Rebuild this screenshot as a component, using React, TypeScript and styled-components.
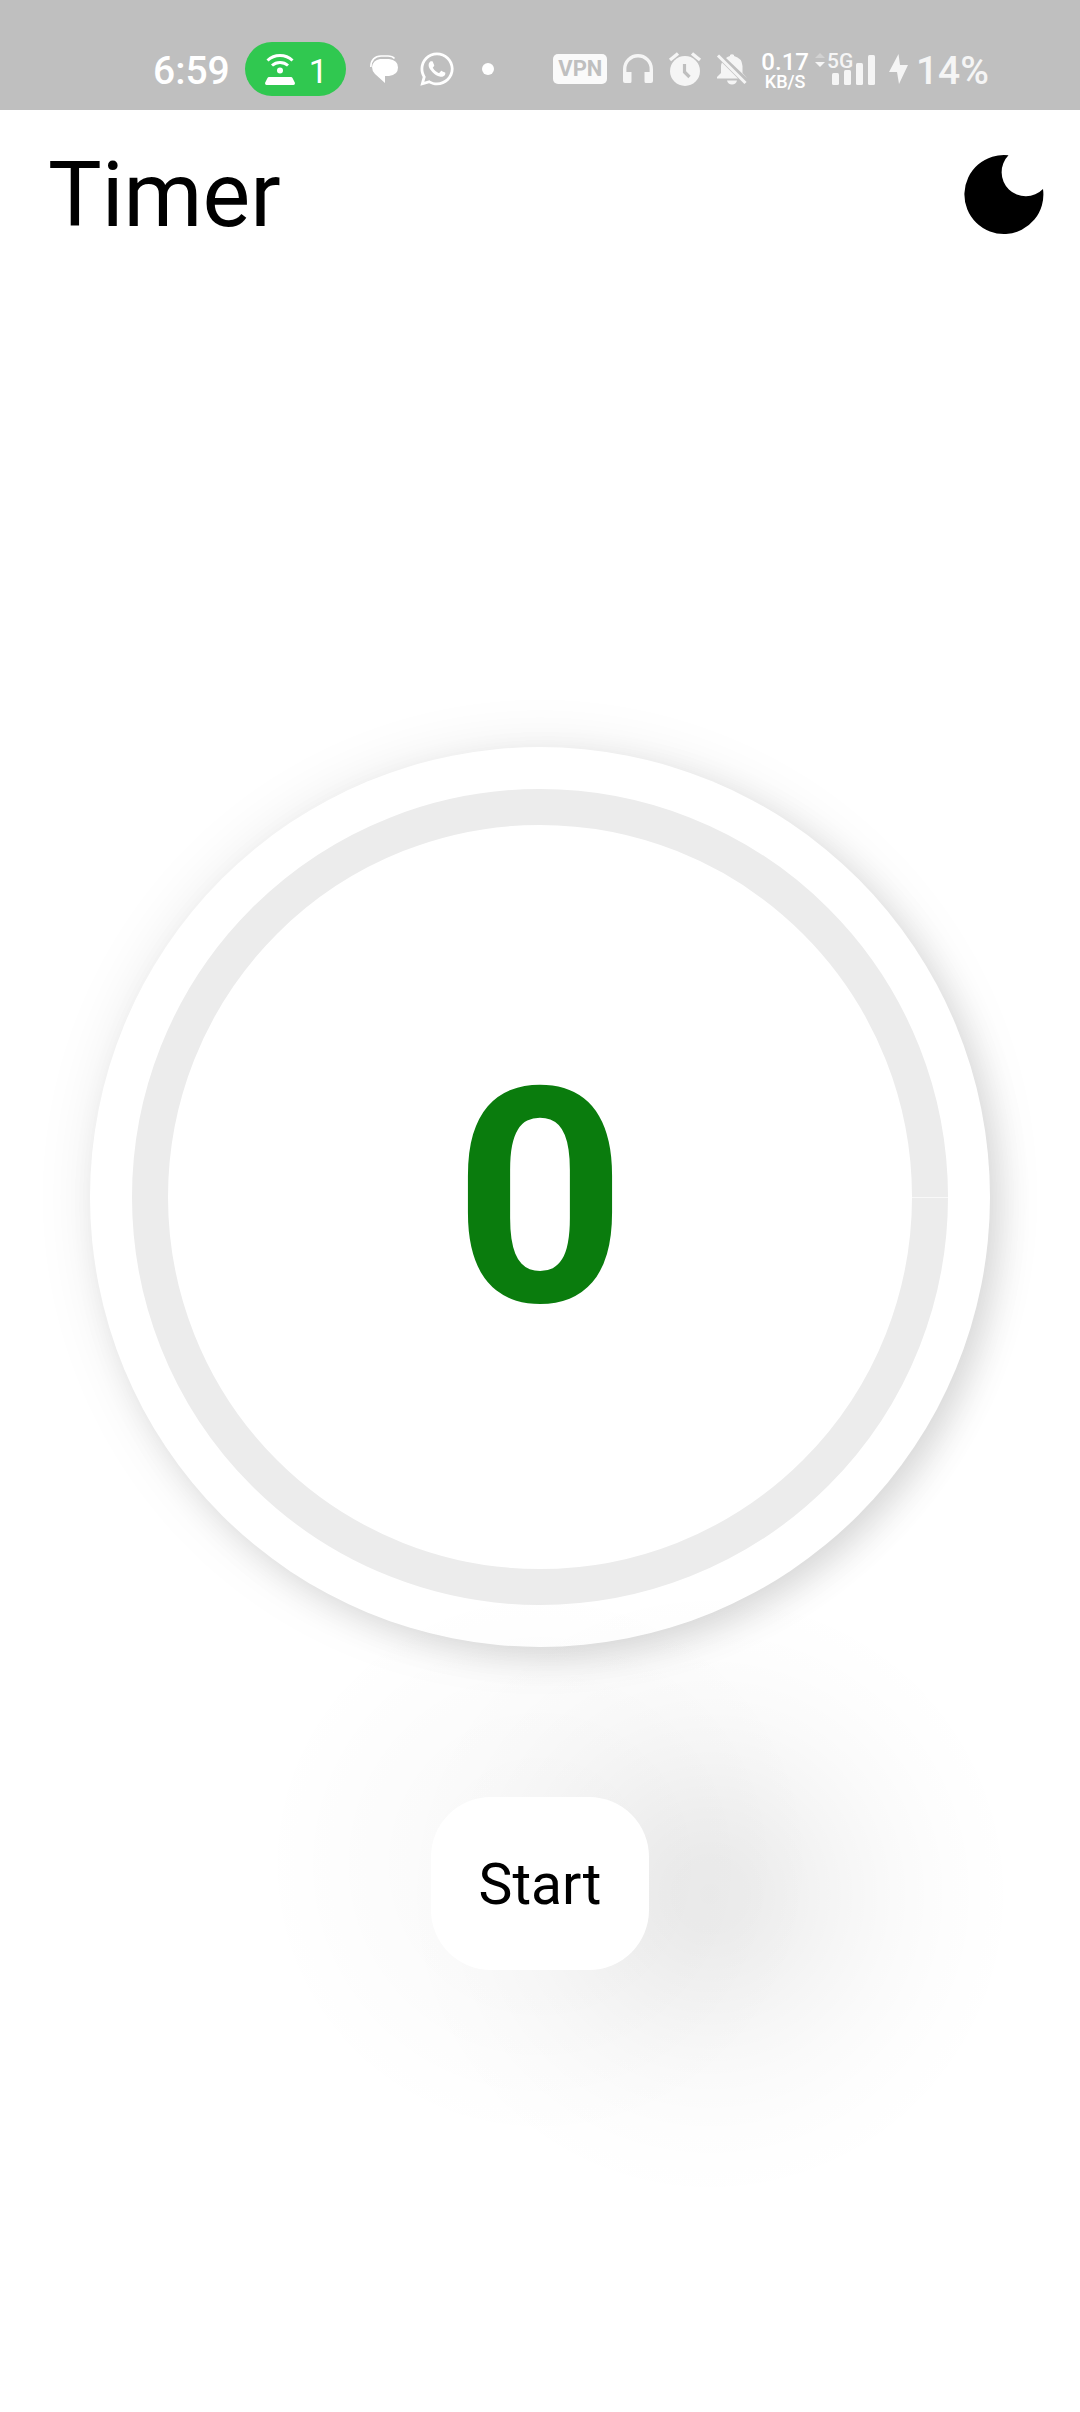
import React, { useEffect, useState } from "react";
import styled, { createGlobalStyle } from "styled-components";
import { FaWhatsapp } from "react-icons/fa";

const GlobalStyle = createGlobalStyle`
  *, *::before, *::after { box-sizing: border-box; }
  body {
    margin: 0;
    background: #ffffff;
    color: #000000;
    font-family: Roboto, "Noto Sans", sans-serif;
  }
  button { font-family: inherit; }
`;

const Screen = styled.div`
  display: flex;
  flex-direction: column;
  min-height: 100vh;
  overflow: hidden;
`;

const StatusBar = styled.div`
  display: flex;
  align-items: center;
  justify-content: space-between;
  height: 110px;
  padding: 28px 91px 0 153px;
  background: #bfbfbf;
  color: #ffffff;
`;

const StatusGroup = styled.div<{ $gap: number; $tone?: string }>`
  display: flex;
  align-items: center;
  gap: ${({ $gap }) => $gap}px;
  color: ${({ $tone }) => $tone ?? "#ffffff"};
`;

const StatusText = styled.span`
  padding-top: 4px;
  font-size: 39px;
  line-height: 46px;
  font-weight: 500;
`;

const HotspotPill = styled.span`
  display: flex;
  align-items: center;
  gap: 14px;
  height: 54px;
  padding: 0 18px 0 20px;
  border-radius: 27px;
  background: #30c850;
`;

const ClientCount = styled.span`
  padding-top: 4px;
  font-size: 34px;
  line-height: 40px;
`;

const VpnBadge = styled.span`
  padding: 0 5px;
  border-radius: 5px;
  background: #fafafa;
  color: #bfbfbf;
  font-size: 22px;
  line-height: 30px;
  font-weight: 700;
`;

const NetSpeed = styled.span`
  display: flex;
  flex-direction: column;
  align-items: center;
  padding-top: 4px;
  color: #ffffff;
`;

const SpeedValue = styled.span`
  font-size: 24px;
  line-height: 22px;
  font-weight: 500;
`;

const SpeedUnit = styled.span`
  font-size: 18px;
  line-height: 18px;
  font-weight: 500;
`;

const Icon = styled.svg`
  display: block;
  flex: none;
  overflow: visible;
`;

const Header = styled.header`
  display: flex;
  align-items: center;
  justify-content: space-between;
  height: 168px;
  padding: 0 37px 0 48px;
`;

const Title = styled.h1`
  margin: 0;
  padding-top: 4px;
  font-size: 90px;
  line-height: 106px;
  font-weight: 400;
`;

const ThemeButton = styled.button`
  padding: 0;
  border: 0;
  background: none;
  color: inherit;
  cursor: pointer;
`;

const Main = styled.main`
  display: flex;
  flex: 1;
  flex-direction: column;
  align-items: center;
  justify-content: center;
  gap: 150px;
  padding-top: 27px;
`;

const Dial = styled.div`
  width: 100%;
  max-width: 900px;
  aspect-ratio: 1;
  padding: 42px;
  border-radius: 50%;
  background: #ffffff;
  box-shadow:
    0 0 60px rgba(0, 0, 0, 0.08),
    12px 12px 32px rgba(0, 0, 0, 0.11);
`;

const Track = styled.div`
  position: relative;
  display: flex;
  align-items: center;
  justify-content: center;
  width: 100%;
  height: 100%;
  border: 36px solid #ececec;
  border-radius: 50%;

  &::after {
    content: "";
    position: absolute;
    top: 50%;
    right: -36px;
    width: 36px;
    height: 1px;
    background: #f8f8f8;
  }
`;

const Count = styled.output`
  padding-top: 4px;
  color: #0a7c0d;
  font-size: 300px;
  line-height: 352px;
  font-weight: 700;
`;

const StartArea = styled.div`
  position: relative;
  z-index: 0;

  /* Wide soft glow spilling out to the right of the button */
  &::before {
    content: "";
    position: absolute;
    z-index: -1;
    top: 50%;
    left: 50%;
    width: 900px;
    height: 640px;
    margin: -310px 0 0 -300px;
    background:
      radial-gradient(
        circle 310px at 470px 320px,
        rgba(0, 0, 0, 0.075) 0%,
        rgba(0, 0, 0, 0.07) 12%,
        rgba(0, 0, 0, 0.056) 27%,
        rgba(0, 0, 0, 0.036) 44%,
        rgba(0, 0, 0, 0.02) 60%,
        rgba(0, 0, 0, 0.008) 78%,
        rgba(0, 0, 0, 0) 100%
      ),
      radial-gradient(
        circle 280px at 300px 290px,
        rgba(0, 0, 0, 0.025) 0%,
        rgba(0, 0, 0, 0.02) 30%,
        rgba(0, 0, 0, 0.01) 62%,
        rgba(0, 0, 0, 0) 100%
      );
    pointer-events: none;
  }
`;

const StartButton = styled.button`
  display: block;
  padding: 54px 48px 52px;
  border: 0;
  border-radius: 60px;
  background: #ffffff;
  color: #000000;
  font-size: 57px;
  line-height: 67px;
  cursor: pointer;
`;

const HotspotIcon = () => (
  <Icon width="30" height="32" viewBox="0 0 30 32" aria-hidden="true">
    <g fill="none" stroke="currentColor" strokeWidth="3">
      <path d="M2.500 7.500a18 18 0 0 1 25 0" />
      <path d="M7 12.500a12 12 0 0 1 16 0" />
    </g>
    <circle cx="15" cy="17.500" r="3" fill="currentColor" />
    <path d="M4 24h22q1 0 1.500 1l2.500 5q0 2-1.500 2h-27q-1.500 0-1.500-2l2.500-5q.5-1 1.500-1z" fill="currentColor" />
  </Icon>
);

const MessagesIcon = () => (
  <Icon width="28" height="28" viewBox="0 0 28 28" aria-hidden="true">
    <path
      d="M10 4h9q9 1 9 8.500T19 21h-4v7L5 19q-3-3-3-7 1-7 8-8z"
      fill="currentColor"
    />
    <path d="M.8 12C.8 5 5 1 11 1h7c3 0 5 .8 6.500 2.500" fill="none" stroke="currentColor" strokeWidth="1.600" />
  </Icon>
);

const MoreDot = () => (
  <Icon width="24" height="12" viewBox="0 0 24 12" aria-hidden="true">
    <circle cx="12" cy="6" r="6" fill="currentColor" />
  </Icon>
);

const HeadphonesIcon = () => (
  <Icon width="30" height="30" viewBox="0 0 30 30" aria-hidden="true">
    <path d="M1.700 20v-5a13.300 13.300 0 0 1 26.600 0v5" fill="none" stroke="currentColor" strokeWidth="3.400" />
    <path
      d="M0 18h8.500v9.500q0 1.500-1.500 1.500H2q-2 0-2-2zM30 18h-8.500v9.500q0 1.500 1.500 1.500h5q2 0 2-2z"
      fill="currentColor"
    />
  </Icon>
);

const AlarmIcon = () => (
  <Icon width="32" height="34" viewBox="0 0 32 34" aria-hidden="true">
    <circle cx="16" cy="19" r="15" fill="currentColor" />
    <path d="M1 8l8-6.500M31 8l-8-6.500" stroke="currentColor" strokeWidth="3.400" />
    <path d="M15.500 12v8l5 5" fill="none" stroke="#bfbfbf" strokeWidth="3.200" />
  </Icon>
);

const MutedBellIcon = () => (
  <Icon width="30" height="31" viewBox="0 0 30 31" aria-hidden="true">
    <path
      d="M9 4q2-1.500 4-2V1q2-1.500 4 0v1q8 2 8.500 10v7l4.500 5z"
      fill="currentColor"
    />
    <path d="M5 8.500L21 24.500H0V23l4-4v-7q0-2 1-3.500zM10 26.500h10q-1 4-5 4t-5-4z" fill="currentColor" />
    <path d="M1 1.500L28.500 29" stroke="currentColor" strokeWidth="3" />
  </Icon>
);

const SignalIcon = () => (
  <Icon width="60" height="34" viewBox="0 0 60 34" role="img" aria-label="5G signal">
    <path d="M0 6l5-5 5 5z" fill="#d2d2d2" />
    <path d="M0 10h10l-5 5z" fill="currentColor" />
    <text x="12" y="16" fill="currentColor" fontFamily="Roboto, sans-serif" fontSize="21" fontWeight="500">
      5G
    </text>
    <g fill="currentColor">
      <rect x="17" y="21" width="7" height="12" rx="1.500" />
      <rect x="29" y="18" width="7" height="15" rx="1.500" />
      <rect x="41" y="11" width="7" height="22" rx="1.500" />
      <rect x="53" y="3" width="7" height="30" rx="1.500" />
    </g>
  </Icon>
);

const BoltIcon = () => (
  <Icon width="19" height="30" viewBox="0 0 19 30" aria-hidden="true">
    <path d="M9.500 0L0 18h8l2 12 9-19h-8z" fill="currentColor" />
  </Icon>
);

const MoonIcon = () => (
  <Icon width="79" height="79" viewBox="0 0 79 79" aria-hidden="true">
    <path d="M44.500.300A24 24 0 1 0 79 34A39.500 39.500 0 1 1 44.500.300z" fill="currentColor" />
  </Icon>
);

export default function App() {
  const [count, setCount] = useState(0);
  const [running, setRunning] = useState(false);

  useEffect(() => {
    if (!running) return;
    const id = window.setInterval(() => setCount((value) => value + 1), 1000);
    return () => window.clearInterval(id);
  }, [running]);

  return (
    <>
      <GlobalStyle />
      <Screen>
        <StatusBar>
          <StatusGroup $gap={24}>
            <StatusGroup $gap={15}>
              <StatusText>6:59</StatusText>
              <HotspotPill>
                <HotspotIcon />
                <ClientCount>1</ClientCount>
              </HotspotPill>
            </StatusGroup>
            <StatusGroup $gap={20}>
              <MessagesIcon />
              <FaWhatsapp size={38} aria-hidden="true" />
              <MoreDot />
            </StatusGroup>
          </StatusGroup>
          <StatusGroup $gap={14} $tone="#f5f5f5">
            <StatusGroup $gap={16} $tone="#f5f5f5">
              <VpnBadge>VPN</VpnBadge>
              <HeadphonesIcon />
              <AlarmIcon />
              <MutedBellIcon />
            </StatusGroup>
            <StatusGroup $gap={6} $tone="#f5f5f5">
              <NetSpeed>
                <SpeedValue>0.17</SpeedValue>
                <SpeedUnit>KB/S</SpeedUnit>
              </NetSpeed>
              <SignalIcon />
            </StatusGroup>
            <StatusGroup $gap={8} $tone="#f5f5f5">
              <BoltIcon />
              <StatusText>14%</StatusText>
            </StatusGroup>
          </StatusGroup>
        </StatusBar>
        <Header>
          <Title>Timer</Title>
          <ThemeButton type="button" aria-label="Dark mode">
            <MoonIcon />
          </ThemeButton>
        </Header>
        <Main>
          <Dial>
            <Track>
              <Count>{count}</Count>
            </Track>
          </Dial>
          <StartArea>
            <StartButton type="button" onClick={() => setRunning(!running)}>
              {running ? "Stop" : "Start"}
            </StartButton>
          </StartArea>
        </Main>
      </Screen>
    </>
  );
}
